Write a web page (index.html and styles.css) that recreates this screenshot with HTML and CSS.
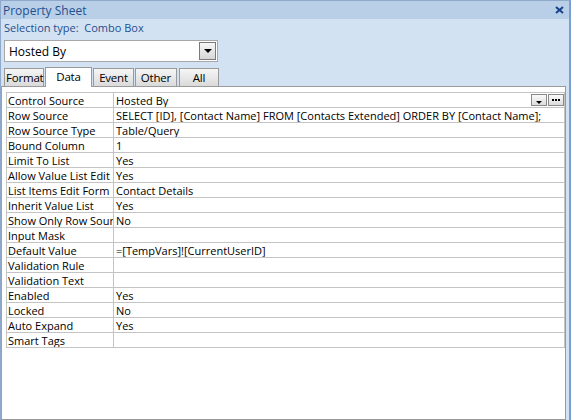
FILE: index.html
```html
<!DOCTYPE html>
<html lang="en">
<head>
    <meta charset="UTF-8">
    <title>Property Sheet</title>
    <link rel="stylesheet" href="styles.css">
</head>
<body>
    <div class="sheet">
        <div class="titlebar">
            <span class="title">Property Sheet</span>
            <svg class="close" width="9" height="8" viewBox="0 0 9 8">
                <path d="M1 1 L8 7 M8 1 L1 7" stroke="#15428b" stroke-width="2"/>
            </svg>
        </div>
        <div class="selection">Selection type:&nbsp;&nbsp;Combo Box</div>
        <div class="combo">
            <span class="combo-text">Hosted By</span>
            <span class="combo-btn"><span class="tri"></span></span>
        </div>
        <div class="tabs">
            <div class="tab tab-format">Format</div>
            <div class="tab tab-data active">Data</div>
            <div class="tab tab-event">Event</div>
            <div class="tab tab-other">Other</div>
            <div class="tab tab-all">All</div>
        </div>
        <div class="pane">
            <table class="props">
                <tr>
                    <td class="name">Control Source</td>
                    <td class="value">
                        <div class="value-wrap">
                            <span>Hosted By</span>
                            <span class="builders">
                                <span class="bbtn"><span class="tri small"></span></span>
                                <span class="bbtn">
                                    <svg width="9" height="4" viewBox="0 0 9 4">
                                        <rect x="0" y="1" width="2" height="2" fill="#000"/>
                                        <rect x="3" y="1" width="2" height="2" fill="#000"/>
                                        <rect x="6" y="1" width="2" height="2" fill="#000"/>
                                    </svg>
                                </span>
                            </span>
                        </div>
                    </td>
                </tr>
                <tr><td class="name">Row Source</td><td class="value">SELECT [ID], [Contact Name] FROM [Contacts Extended] ORDER BY [Contact Name];</td></tr>
                <tr><td class="name">Row Source Type</td><td class="value">Table/Query</td></tr>
                <tr><td class="name">Bound Column</td><td class="value">1</td></tr>
                <tr><td class="name">Limit To List</td><td class="value">Yes</td></tr>
                <tr><td class="name">Allow Value List Edit</td><td class="value">Yes</td></tr>
                <tr><td class="name">List Items Edit Form</td><td class="value">Contact Details</td></tr>
                <tr><td class="name">Inherit Value List</td><td class="value">Yes</td></tr>
                <tr><td class="name">Show Only Row Source Values</td><td class="value">No</td></tr>
                <tr><td class="name">Input Mask</td><td class="value"></td></tr>
                <tr><td class="name">Default Value</td><td class="value">=[TempVars]![CurrentUserID]</td></tr>
                <tr><td class="name">Validation Rule</td><td class="value"></td></tr>
                <tr><td class="name">Validation Text</td><td class="value"></td></tr>
                <tr><td class="name">Enabled</td><td class="value">Yes</td></tr>
                <tr><td class="name">Locked</td><td class="value">No</td></tr>
                <tr><td class="name">Auto Expand</td><td class="value">Yes</td></tr>
                <tr><td class="name">Smart Tags</td><td class="value"></td></tr>
            </table>
        </div>
    </div>
</body>
</html>
```

FILE: styles.css
```css
* {
    margin: 0;
    padding: 0;
    box-sizing: border-box;
}
body {
    font-family: "Open Sans", "Noto Sans", sans-serif;
    background-color: #d3e2f2;
    color: #000;
}
.sheet {
    width: 571px;
    height: 420px;
    display: flex;
    flex-direction: column;
    background-color: #d3e2f2;
    border-left: 1px solid #8fa9cc;
    border-right: 2px solid #7a9fd4;
    border-top: 1px solid #8fa9cc;
}
.titlebar {
    height: 18px;
    background-color: #b9cfe8;
    display: flex;
    align-items: center;
    justify-content: space-between;
    padding: 0 5px 0 2px;
}
.title {
    font-size: 12px;
    color: #1f4f8f;
}
.selection {
    height: 17px;
    font-size: 11px;
    color: #1f4f8f;
    padding-left: 3px;
    line-height: 17px;
}
.combo {
    margin: 4px 0 0 3px;
    width: 214px;
    height: 22px;
    background: #fff;
    border: 1px solid #a8a8a8;
    display: flex;
    align-items: center;
    justify-content: space-between;
    padding: 0 1px 0 4px;
}
.combo-text {
    font-size: 12px;
}
.combo-btn {
    width: 17px;
    height: 18px;
    border: 1px solid #7a7a7a;
    background: linear-gradient(#f7f7f7, #d6d6d6);
    display: flex;
    align-items: center;
    justify-content: center;
}
.tri {
    width: 0;
    height: 0;
    border-left: 4px solid transparent;
    border-right: 4px solid transparent;
    border-top: 4px solid #000;
}
.tri.small {
    border-left-width: 3px;
    border-right-width: 3px;
    border-top-width: 3px;
    margin-top: 5px;
}
.tabs {
    display: flex;
    align-items: flex-end;
    height: 20px;
    margin-top: 4px;
    padding-left: 3px;
}
.tab {
    height: 18px;
    border: 1px solid #9a9a9a;
    border-bottom: none;
    background: linear-gradient(#f6f6f6, #dadada);
    font-size: 11.5px;
    text-align: center;
    line-height: 17px;
    margin-right: 1px;
    letter-spacing: -0.2px;
}
.tab-format { width: 40px; text-align: left; padding-left: 1px; }
.tab-data { width: 47px; }
.tab-event { width: 41px; }
.tab-other { width: 42px; margin-right: 2px; }
.tab-all { width: 40px; }
.tab.active {
    height: 20px;
    background: #fff;
    line-height: 17px;
    position: relative;
    top: 1px;
}
.pane {
    flex: 1;
    background: #fff;
    border: 1px solid #9a9a9a;
    border-left-color: #a0a0a0;
    margin-right: 3px;
    padding: 5px 0 0 4px;
}
.props {
    border-collapse: collapse;
    width: 559px;
    table-layout: fixed;
    font-size: 11px;
}
.props td {
    height: 15px;
    border: 1px solid #c4c4c4;
    padding: 0 0 0 2px;
    line-height: 13px;
    white-space: nowrap;
    overflow: hidden;
}
.props td.name {
    width: 107px;
    padding-left: 1px;
}
.value-wrap {
    display: flex;
    justify-content: space-between;
    align-items: center;
}
.builders {
    display: flex;
    gap: 1px;
}
.bbtn {
    width: 16px;
    height: 12px;
    border: 1px solid #8a8a8a;
    background: linear-gradient(#fafafa, #dcdcdc);
    display: flex;
    justify-content: center;
    align-items: center;
}
```
